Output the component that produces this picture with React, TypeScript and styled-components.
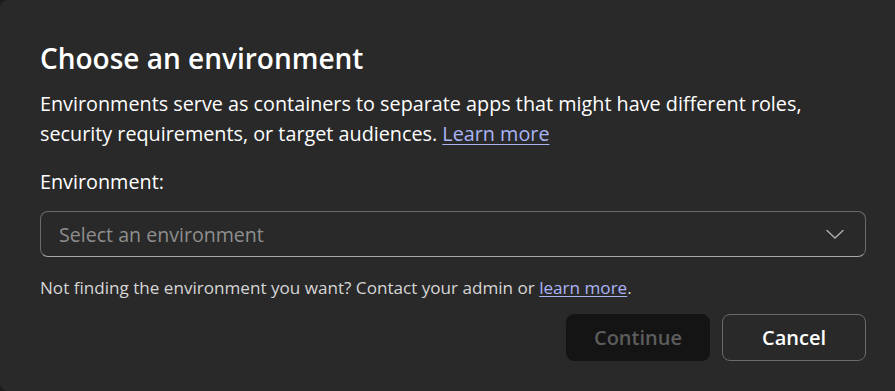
import styled, { createGlobalStyle } from 'styled-components';

const GlobalStyle = createGlobalStyle`
	html, body {
		margin: 0;
		padding: 0;
		background: #1c1c1c;
	}
	* {
		box-sizing: border-box;
	}
`;

const Dialog = styled.div`
	width: 895px;
	height: 391px;
	background: #292929;
	border-radius: 8px 0 0 8px;
	padding: 40px 29px 0 40px;
	font-family: 'Open Sans', 'Noto Sans', sans-serif;
	color: #ffffff;
	display: flex;
	flex-direction: column;
`;

const Title = styled.h2`
	margin: 0;
	font-size: 28px;
	font-weight: 600;
	line-height: 36px;
`;

const Description = styled.p`
	margin: 13px 0 0;
	font-size: 19.8px;
	line-height: 30px;
	color: #ffffff;
`;

const Link = styled.a<{ small?: boolean }>`
	color: #a9b4f5;
	text-decoration: underline;
	text-underline-offset: ${({ small }) => (small ? '2px' : '3px')};
	cursor: pointer;
`;

const Label = styled.label`
	margin-top: 19px;
	font-size: 19.8px;
	line-height: 28px;
`;

const Select = styled.div`
	margin-top: 15px;
	height: 46px;
	flex-shrink: 0;
	display: flex;
	align-items: center;
	justify-content: space-between;
	padding: 0 20px 0 18px;
	border: 1px solid #6a6a6a;
	border-bottom-color: #a8a8a8;
	border-radius: 8px;
	font-size: 19.6px;
	color: #8e8e8e;
`;

const Hint = styled.p`
	margin: 19px 0 0;
	font-size: 17.1px;
	line-height: 24px;
	color: #d6d6d6;
`;

const Actions = styled.div`
	margin-top: 14px;
	display: flex;
	justify-content: flex-end;
	gap: 12px;
`;

const Button = styled.button<{ primary?: boolean }>`
	width: 144px;
	height: 47px;
	border-radius: 8px;
	font-family: inherit;
	font-size: 20px;
	font-weight: 600;
	border: 1px solid ${({ primary }) => (primary ? '#141414' : '#6b6b6b')};
	background: ${({ primary }) => (primary ? '#141414' : '#292929')};
	color: ${({ primary }) => (primary ? '#5c5c5c' : '#ffffff')};
	cursor: ${({ primary }) => (primary ? 'default' : 'pointer')};
`;

const Chevron = () => (
	<svg width="20" height="20" viewBox="0 0 20 20" fill="none">
		<path d="M2 6.5l8 7.5 8-7.5" stroke="#b0b0b0" strokeWidth="1.4" strokeLinecap="round" strokeLinejoin="round" />
	</svg>
);

const App = () => (
	<>
		<GlobalStyle />
		<Dialog>
			<Title>Choose an environment</Title>
			<Description>
				Environments serve as containers to separate apps that might have different roles,
				security requirements, or target audiences. <Link>Learn more</Link>
			</Description>
			<Label>Environment:</Label>
			<Select>
				<span>Select an environment</span>
				<Chevron />
			</Select>
			<Hint>
				Not finding the environment you want? Contact your admin or <Link small>learn more</Link>.
			</Hint>
			<Actions>
				<Button primary disabled>Continue</Button>
				<Button>Cancel</Button>
			</Actions>
		</Dialog>
	</>
);

export default App;
